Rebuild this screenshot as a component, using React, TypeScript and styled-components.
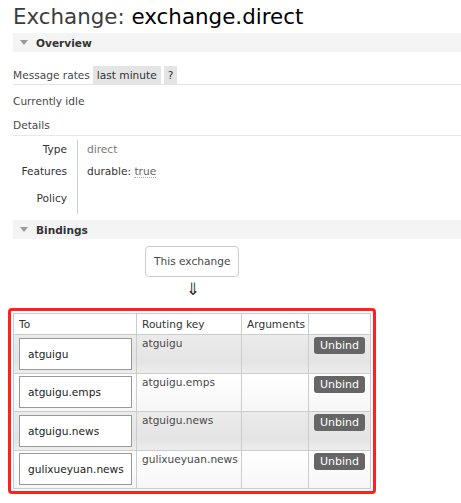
import React, { FC } from 'react';
import styled, { createGlobalStyle } from 'styled-components';

const GlobalStyle = createGlobalStyle`
  body {
    margin: 0;
    background: #fff;
    font-family: 'DejaVu Sans', Verdana, sans-serif;
    color: #484848;
  }
`;

const bindings = [
  { to: 'atguigu', key: 'atguigu' },
  { to: 'atguigu.emps', key: 'atguigu.emps' },
  { to: 'atguigu.news', key: 'atguigu.news' },
  { to: 'gulixueyuan.news', key: 'gulixueyuan.news' },
];

const SectionHeader: FC<{ title: string }> = ({ title }) => (
  <Bar>
    <Triangle />
    {title}
  </Bar>
);

const App: FC = () => (
  <Page>
    <GlobalStyle />
    <Title>
      <TitleLabel>Exchange:</TitleLabel>
      {' '}
      exchange.direct
    </Title>
    <SectionHeader title="Overview" />
    <RatesRow>
      Message rates
      <Pill>last minute</Pill>
      <Pill>?</Pill>
    </RatesRow>
    <Line>Currently idle</Line>
    <DetailsHeading>Details</DetailsHeading>
    <Facts>
      <FactLabels>
        <span>Type</span>
        <span>Features</span>
        <span>Policy</span>
      </FactLabels>
      <FactValues>
        <Muted>direct</Muted>
        <span>
          durable:
          {' '}
          <Dotted>true</Dotted>
        </span>
        <span />
      </FactValues>
    </Facts>
    <SectionHeader title="Bindings" />
    <Flow>
      <ExchangeBox>This exchange</ExchangeBox>
      <Arrow>⇓</Arrow>
    </Flow>
    <Highlight>
      <BindTable>
        <colgroup>
          <col width={123} />
          <col width={105} />
          <col width={67} />
          <col />
        </colgroup>
        <thead>
          <tr>
            <Th>To</Th>
            <Th>Routing key</Th>
            <Th>Arguments</Th>
            <Th />
          </tr>
        </thead>
        <tbody>
          {bindings.map((b, i) => (
            <Row key={b.to} alt={i % 2 === 0}>
              <Td>
                <QueueBox>{b.to}</QueueBox>
              </Td>
              <Td top>{b.key}</Td>
              <Td />
              <Td top>
                <UnbindButton>Unbind</UnbindButton>
              </Td>
            </Row>
          ))}
        </tbody>
      </BindTable>
    </Highlight>
  </Page>
);

const Page = styled.div`
  padding: 3px 0 0 13px;
  font-size: 10.6px;
`;

const Title = styled.h1`
  margin: 0 0 2px;
  font-size: 21.4px;
  font-weight: normal;
  color: #000;
  line-height: 28px;
`;

const TitleLabel = styled.span`
  color: #3c3c3c;
`;

const Bar = styled.div`
  display: flex;
  align-items: center;
  gap: 8px;
  height: 19px;
  padding-left: 7px;
  background: #f4f4f4;
  font-weight: bold;
  font-size: 10.6px;
  color: #333;
`;

const Triangle = styled.span`
  width: 0;
  height: 0;
  border-left: 4px solid transparent;
  border-right: 4px solid transparent;
  border-top: 5px solid #999;
`;

const RatesRow = styled.div`
  display: flex;
  align-items: center;
  gap: 3px;
  margin-top: 14px;
  height: 18px;
  border-bottom: 1px solid #e4e4e4;
`;

const Pill = styled.span`
  display: inline-flex;
  align-items: center;
  height: 18px;
  padding: 0 4px;
  background: #e4e4e4;
  color: #333;
`;

const Line = styled.div`
  margin-top: 8px;
  line-height: 16px;
`;

const DetailsHeading = styled(Line)`
  padding-bottom: 2px;
  border-bottom: 1px solid #e8e8e8;
`;

const Facts = styled.div`
  display: flex;
  margin-top: 4px;
  margin-bottom: 6px;
`;

const FactLabels = styled.div`
  display: flex;
  flex-direction: column;
  align-items: flex-end;
  gap: 8px;
  width: 54px;
  padding: 2px 10px 9px 0;
  border-right: 1px solid #ccc;
  color: #333;
  line-height: 14px;

  span:nth-child(3) {
    margin-top: 5px;
  }
`;

const FactValues = styled.div`
  display: flex;
  flex-direction: column;
  gap: 8px;
  padding: 2px 0 0 9px;
  line-height: 14px;
  color: #333;
`;

const Muted = styled.span`
  color: #777;
`;

const Dotted = styled.span`
  color: #666;
  border-bottom: 1px dotted #aaa;
`;

const Flow = styled.div`
  display: flex;
  flex-direction: column;
  align-items: flex-start;
  padding-left: 132px;
  margin-top: 7px;
`;

const ExchangeBox = styled.div`
  padding: 8px 8px;
  border: 1px solid #ccc;
  border-radius: 4px;
  color: #484848;
  line-height: 13px;
`;

const Arrow = styled.div`
  margin: 2px 0 0 41px;
  font-size: 17px;
  line-height: 20px;
  color: #333;
`;

const Highlight = styled.div`
  display: inline-block;
  margin: 9px 0 0 -5px;
  padding: 2px;
  border: 3px solid #ff2020;
  border-radius: 4px;
`;

const BindTable = styled.table`
  border-collapse: collapse;
  table-layout: fixed;
  width: 358px;
  border: 1px solid #ddd;
`;

const Th = styled.th`
  text-align: left;
  font-weight: normal;
  height: 20px;
  padding: 0 5px;
  border: 1px solid #ccc;
  background: #fff;
  color: #333;
`;

const Row = styled.tr<{ alt: boolean }>`
  background: ${(p) => (p.alt
    ? 'linear-gradient(#ebebeb, #e4e4e4 70%, #eeeeee)'
    : 'linear-gradient(#ffffff, #f6f6f6)')};
`;

const Td = styled.td<{ top?: boolean }>`
  height: 33.5px;
  padding: ${(p) => (p.top ? '2px 5px 0' : '2px 4px 2px 5px')};
  vertical-align: ${(p) => (p.top ? 'top' : 'middle')};
  border: 1px solid #ccc;
  color: #484848;
  white-space: nowrap;
`;

const QueueBox = styled.div`
  width: 113px;
  height: 32px;
  box-sizing: border-box;
  display: flex;
  align-items: center;
  padding-left: 8px;
  border: 1px solid #999;
  background: #fff;
  color: #222;
`;

const UnbindButton = styled.span`
  display: inline-block;
  padding: 1px 6px;
  border-radius: 3px;
  background: #666;
  color: #fff;
  font-size: 11px;
  line-height: 15px;
`;

export default App;
